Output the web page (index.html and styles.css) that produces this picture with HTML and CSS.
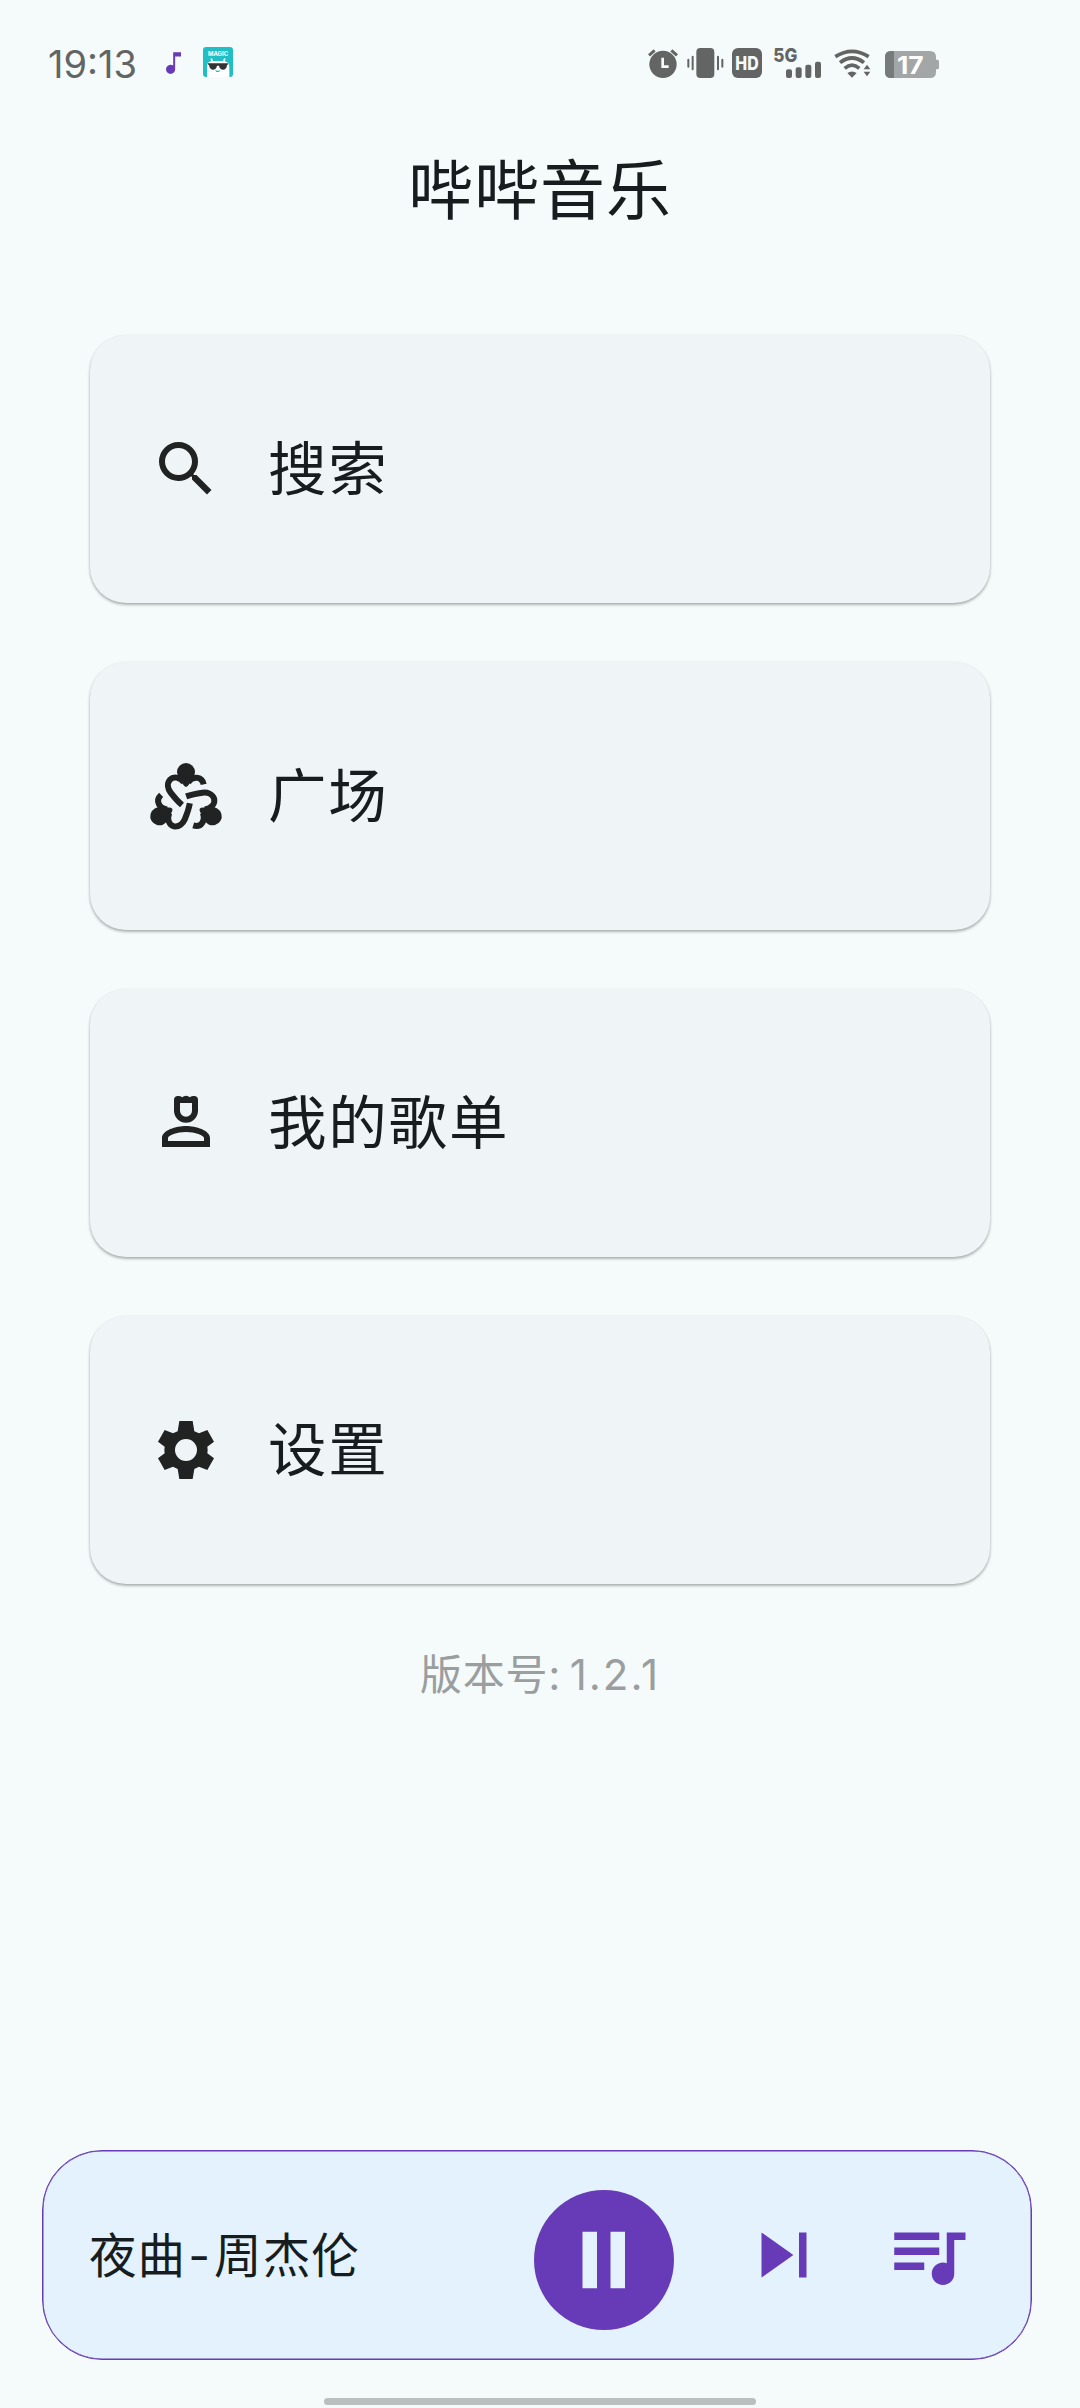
FILE: index.html
```html
<!DOCTYPE html>
<html lang="zh-CN">
<head>
<meta charset="utf-8">
<title>哔哔音乐</title>
<link rel="stylesheet" href="styles.css">
</head>
<body>
<div class="screen">
  <header class="status">
    <span class="time">19:13</span>
    <svg class="note" viewBox="407 66 46 66"><path d="M429 66h24v13h-18v39a14 14 0 1 1-6-11z"/></svg>
    <svg class="magic" viewBox="0 0 90 90">
      <rect width="90" height="90" rx="9" fill="#20bfc6"/>
      <text x="45" y="27" text-anchor="middle" textLength="60" lengthAdjust="spacingAndGlyphs">MAGIC</text>
      <path d="M12 90V60C12 47 19 43 25 42L22 35 27 34 30 42H60L63 34 68 35 65 42C74 45 79 50 79 60V90z" fill="#fff"/>
      <path d="M15 49h60v4h-3c0 20-22 20-24 3h-6c-2 17-23 17-24-3h-3z" fill="#333"/>
      <path d="M36 69q9 5 17 0l-5 6h-8z" fill="#20bfc6"/>
    </svg>
    <div class="indicators">
      <svg class="alarm" viewBox="54 51 90 96"><circle cx="99" cy="103" r="41"/><path d="M57 76L74 61M124 61L141 76" class="line w9"/><path d="M98 83V110H116" class="cut"/></svg>
      <svg class="vibrate" viewBox="170 51 111 96"><rect x="198" y="54" width="54" height="90" rx="12"/><path d="M174 89V110M187 80V118M263 80V118M276 89V110" class="line w6"/></svg>
      <svg class="hd" viewBox="306 51 90 96"><rect x="306" y="54" width="90" height="90" rx="18"/><text x="351" y="119" text-anchor="middle" textLength="70" lengthAdjust="spacingAndGlyphs">HD</text></svg>
      <svg class="signal" viewBox="429 51 147 96"><text x="430" y="97" textLength="72" lengthAdjust="spacingAndGlyphs">5G</text><rect x="468" y="118" width="18" height="26" rx="6"/><rect x="497" y="112" width="18" height="32" rx="6"/><rect x="526" y="104" width="18" height="40" rx="6"/><rect x="555" y="95" width="18" height="49" rx="6"/></svg>
      <svg class="wifi" viewBox="612 51 111 96"><path d="M616 80Q666 48 716 80M630 98Q666 70 702 98M644 115Q666 96 688 115" class="line w11"/><path d="M652 129Q666 120 680 129L666 143zM701 118l10-14 10 14zM701 125h20l-10 14z"/></svg>
      <svg class="battery" viewBox="765 51 165 96"><path d="M783 63H900Q918 63 918 81V89H922Q927 89 927 94V114Q927 118 922 118H918V126Q918 144 900 144H783Q765 144 765 126V81Q765 63 783 63z" fill="#a3a6a6"/><path d="M792 63H783Q765 63 765 81V126Q765 144 783 144H792z" fill="#777a7a"/><text x="841" y="131" text-anchor="middle" textLength="80" lengthAdjust="spacingAndGlyphs">17</text></svg>
    </div>
  </header>

  <h1 class="title">哔哔音乐</h1>

  <nav class="menu">
    <a class="card">
      <svg class="icon" viewBox="0 0 24 24"><path d="M15.5 14h-.79l-.28-.27A6.471 6.471 0 0 0 16 9.5 6.5 6.5 0 1 0 9.5 16c1.61 0 3.09-.59 4.23-1.57l.27.28v.79l5 4.99L20.49 19l-4.99-5zm-6 0C7.01 14 5 11.99 5 9.5S7.01 5 9.500 5 14 7.010 14 9.500 11.990 14 9.500 14z"/></svg>
      <span class="label">搜索</span>
    </a>
    <a class="card">
      <svg class="icon" viewBox="60 63 216 216">
        <defs><g id="member"><circle cx="168" cy="99" r="27"/><path d="M144 108L159 136Q168 152 177 136L192 108z"/><path d="M162 130C148 113 130 112 120 122C110 134 113 149 122 161C132 174 143 187 156 198M174 130C188 112 215 110 221 136" class="limb"/></g></defs>
        <use href="#member"/><use href="#member" transform="translate(4 1) rotate(120 168 187)"/><use href="#member" transform="translate(-4 1) rotate(240 168 187)"/>
      </svg>
      <span class="label">广场</span>
    </a>
    <a class="card">
      <svg class="icon" viewBox="60 54 216 216"><path fill-rule="evenodd" d="M96 234V207C96 184 138 171 168 171S240 184 240 207V234zM114 216H222V207C222 199 195 189 168 189S114 199 114 207zM132 93Q132 81 144 81 151 80 156 85 168 76 180 85 185 80 192 81 204 81 204 93V125A36 36 0 0 1 132 125zM150 102V125A18 18 0 0 0 186 125V102z"/></svg>
      <span class="label">我的歌单</span>
    </a>
    <a class="card">
      <svg class="icon" viewBox="60 45 216 216"><path fill-rule="evenodd" d="M148 66H188L193 97 207 103 232 93 252 128 232 143Q234 153 232 163L252 178 232 213 207 203 193 210 188 240H148L143 210 129 203 104 213 84 178 104 163Q102 153 104 143L84 128 104 93 129 103 143 97zM168 120A33 33 0 1 0 168 186A33 33 0 1 0 168 120z"/></svg>
      <span class="label">设置</span>
    </a>
  </nav>

  <p class="version">版本号: <span class="number">1.2.1</span></p>

  <footer class="player">
    <span class="song">夜曲<span class="dash">-</span>周杰伦</span>
    <svg class="pause" viewBox="0 0 140 140"><circle cx="70" cy="70" r="70" fill="#673ab7"/><path d="M48.500 41.700h14.500v56.500h-14.500zM76.500 41.700h14.500v56.500h-14.500z" fill="#e3f2fd"/></svg>
    <svg class="control next" viewBox="0 0 24 24"><path d="M6 18l8.500-6L6 6v12zM16 6v12h2V6h-2z"/></svg>
    <svg class="control queue" viewBox="0 0 24 24"><path d="M15 6H3v2h12V6zm0 4H3v2h12v-2zM3 16h8v-2H3v2zM17 6v8.180c-.31-.11-.65-.18-1-.18-1.660 0-3 1.340-3 3s1.340 3 3 3 3-1.340 3-3V8h3V6h-5z"/></svg>
  </footer>
  <div class="handle"></div>
</div>
</body>
</html>
```
FILE: styles.css
```css
* { box-sizing: border-box; }
body { margin: 0; background: #f5fbfb; }
.screen {
  width: 1080px;
  height: 2408px;
  display: flex;
  flex-direction: column;
  color: #171d1e;
  font-family: Inter, "Noto Sans CJK SC", sans-serif;
  overflow: hidden;
}
svg { display: block; flex: none; overflow: visible; }

.status {
  display: flex;
  align-items: flex-start;
  height: 141px;
  padding: 47px 0 0 48px;
}
.time {
  width: 118px;
  font-size: 38px;
  line-height: 34px;
  color: #626564;
}
.note { width: 15px; height: 22px; margin-top: 5px; fill: #673ab7; }
.magic { width: 30px; height: 30px; margin-left: 22px; }
.magic text { font: 700 18px Inter, sans-serif; fill: #fff; }
.indicators { display: flex; margin-left: 415px; fill: #626564; }
.indicators svg { height: 32px; }
.line { fill: none; stroke: #626564; }
.w6 { stroke-width: 6; stroke-linecap: round; }
.w9 { stroke-width: 9; }
.w11 { stroke-width: 11; }
.cut { fill: none; stroke: #f5fbfb; stroke-width: 8; }
.alarm { width: 30px; }
.vibrate { width: 37px; margin-left: 9px; }
.hd { width: 30px; margin-left: 8px; }
.hd text { font: 800 56px Inter, sans-serif; fill: #f5fbfb; }
.signal { width: 49px; margin-left: 11px; }
.signal text { font: 800 57px Inter, sans-serif; }
.wifi { width: 37px; margin-left: 12px; }
.battery { width: 55px; margin-left: 14px; }
.battery text { font: 700 72px Inter, sans-serif; fill: #fff; }

.title {
  margin: 0 0 94px;
  font-size: 65px;
  line-height: 100px;
  letter-spacing: 1px;
  font-weight: 400;
  text-align: center;
}

.menu { display: flex; flex-direction: column; gap: 59px; padding: 0 90px; }
.card {
  display: flex;
  align-items: center;
  height: 268px;
  padding-left: 60px;
  gap: 46px;
  border-radius: 36px;
  background: #eff4f7;
  box-shadow: 0 2px 3px rgba(0, 0, 0, .24), 0 1px 3px rgba(0, 0, 0, .12);
  font-size: 58.5px;
  letter-spacing: 1.8px;
}
.label { padding-bottom: 9px; }
.icon { width: 72px; height: 72px; fill: #212322; }
.limb { fill: none; stroke: #212322; stroke-width: 18; }

.version {
  margin: 59px 0 0;
  font-size: 42px;
  line-height: 64px;
  letter-spacing: .75px;
  text-align: center;
  color: #9b9e9e;
}
.number { letter-spacing: 2px; margin-left: -4px; }

.player {
  display: flex;
  align-items: center;
  width: 990px;
  height: 210px;
  margin: auto 0 0 42px;
  padding-left: 46px;
  border: 1px solid #673ab7;
  border-radius: 60px;
  background: #e3f2fd;
  box-shadow: inset 0 0 0 .5px #673ab7;
}
.song { width: 445px; padding-bottom: 5px; font-size: 47.5px; letter-spacing: 1.1px; }
.dash { letter-spacing: 4px; margin-left: 2px; }
.pause { width: 140px; height: 140px; margin-top: 9px; }
.control { width: 90px; height: 90px; fill: #673ab7; }
.next { margin-left: 65px; }
.queue { margin-left: 54px; }
.handle { width: 432px; height: 7px; margin: 38px 0 3px 324px; border-radius: 4px; background: #b9bebe; }
```
